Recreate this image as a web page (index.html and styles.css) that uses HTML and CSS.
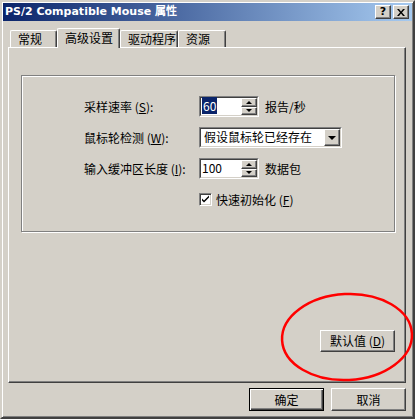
FILE: index.html
```html
<!doctype html>
<html lang="zh-CN">
  <head>
    <meta charset="UTF-8" />
    <meta name="viewport" content="width=device-width, initial-scale=1.0" />
    <title>PS/2 Compatible Mouse 属性</title>
    <link rel="stylesheet" href="styles.css">
  </head>
  <body>
    <div class="window">
      <div class="titlebar">
        <span class="title">PS/2 Compatible Mouse 属性</span>
        <div class="caption-buttons">
          <div class="cap-btn">?</div>
          <div class="cap-btn">
            <svg width="8" height="7" viewBox="0 0 8 7">
              <path d="M0 0h2l2 2.5L6 0h2L5 3.5 8 7H6L4 4.5 2 7H0l3-3.5z" fill="#000" />
            </svg>
          </div>
        </div>
      </div>

      <div class="tabs">
        <div class="tab tab-general">常规</div>
        <div class="tab tab-advanced active">高级设置</div>
        <div class="tab tab-driver">驱动程序</div>
        <div class="tab tab-resource">资源</div>
      </div>

      <div class="panel">
        <div class="group">
          <div class="row">
            <span class="label">采样速率 (<u>S</u>):</span>
            <div class="spin">
              <div class="spin-inner">
                <div class="spin-value"><span class="selected">60</span></div>
                <div class="spin-buttons">
                  <div class="spin-btn"><span class="arrow-up"></span></div>
                  <div class="spin-btn"><span class="arrow-down"></span></div>
                </div>
              </div>
            </div>
            <span class="unit">报告/秒</span>
          </div>

          <div class="row">
            <span class="label">鼠标轮检测 (<u>W</u>):</span>
            <div class="combo">
              <div class="combo-inner">
                <div class="combo-value">假设鼠标轮已经存在</div>
                <div class="combo-btn"><span class="arrow-down big"></span></div>
              </div>
            </div>
          </div>

          <div class="row">
            <span class="label">输入缓冲区长度 (<u>I</u>):</span>
            <div class="spin">
              <div class="spin-inner">
                <div class="spin-value">100</div>
                <div class="spin-buttons">
                  <div class="spin-btn"><span class="arrow-up"></span></div>
                  <div class="spin-btn"><span class="arrow-down"></span></div>
                </div>
              </div>
            </div>
            <span class="unit">数据包</span>
          </div>

          <div class="row check-row">
            <div class="checkbox">
              <svg width="9" height="9" viewBox="0 0 9 9">
                <path d="M1 3.5l2 2 5-5v2l-5 5-2-2z" fill="#000" />
              </svg>
            </div>
            <span class="check-label">快速初始化 (<u>F</u>)</span>
          </div>
        </div>

        <div class="panel-footer">
          <div class="btn">默认值 (<u>D</u>)</div>
        </div>
      </div>

      <div class="actions">
        <div class="btn default">确定</div>
        <div class="btn">取消</div>
      </div>

      <!-- red hand-drawn annotation -->
      <svg class="annotation" width="415" height="419" viewBox="0 0 415 419">
        <ellipse cx="345" cy="335" rx="65" ry="43" transform="rotate(-3 345 335)"
          fill="none" stroke="#f00" stroke-width="2.5" />
      </svg>
    </div>
  </body>
</html>
```

FILE: styles.css
```css
* {
  box-sizing: border-box;
}
body {
  margin: 0;
  background: #d4d0c8;
  font-family: "Noto Sans CJK SC", "Liberation Sans", sans-serif;
  font-size: 12px;
  line-height: 14px;
  color: #000;
}
u {
  text-decoration: underline;
  text-underline-offset: 1px;
}
.window {
  position: relative;
  width: 415px;
  height: 419px;
  background: #d4d0c8;
  border: 2px solid;
  border-color: #d4d0c8 #404040 #404040 #d4d0c8;
  box-shadow: inset 1px 1px #fff, inset -1px -1px #808080;
  padding: 1px;
}
.titlebar {
  height: 18px;
  display: flex;
  align-items: center;
  justify-content: space-between;
  padding: 0 3px 0 2px;
  background: linear-gradient(to right, #0a246a, #a6caf0);
}
.title {
  color: #fff;
  font-family: "DejaVu Sans", sans-serif;
  font-weight: bold;
  font-size: 11px;
}
.caption-buttons {
  display: flex;
  gap: 2px;
}
.cap-btn {
  width: 16px;
  height: 14px;
  display: flex;
  align-items: center;
  justify-content: center;
  background: #d4d0c8;
  border: 1px solid;
  border-color: #fff #404040 #404040 #fff;
  box-shadow: inset -1px -1px #808080;
  font-family: "DejaVu Sans", sans-serif;
  font-weight: bold;
  font-size: 11px;
}

/* tabs */
.tabs {
  display: flex;
  align-items: flex-end;
  height: 19px;
  margin-top: 7px;
  padding-left: 7px;
}
.tab {
  height: 17px;
  padding-left: 7px;
  border: 1px solid #fff;
  border-right-color: #404040;
  border-bottom: none;
  box-shadow: inset -1px 0 #808080;
  border-radius: 2px 2px 0 0;
  background: #d4d0c8;
  line-height: 15px;
}
.tab.active {
  position: relative;
  z-index: 1;
  height: 20px;
  margin-bottom: -1px;
  line-height: 17px;
}
.tab-general { width: 47px; }
.tab-advanced { width: 63px; }
.tab-driver { width: 58px; }
.tab-resource { width: 48px; }

/* panel */
.panel {
  width: 398px;
  height: 336px;
  margin-left: 5px;
  padding: 27px 0 0 12px;
  border: 1px solid;
  border-color: #fff #404040 #404040 #fff;
  box-shadow: inset -1px -1px #808080;
}
.group {
  width: 374px;
  height: 157px;
  padding: 20px 0 0 62px;
  border: 1px solid #808080;
  box-shadow: inset 1px 1px #fff, 1px 1px #fff;
  display: flex;
  flex-direction: column;
  gap: 10px;
}
.row {
  display: flex;
  align-items: center;
  height: 21px;
}
.label {
  width: 115px;
}
.unit {
  margin-left: 6px;
}

/* spin box */
.spin,
.combo {
  border: 1px solid;
  border-color: #808080 #fff #fff #808080;
  height: 21px;
}
.spin {
  width: 60px;
}
.combo {
  width: 143px;
}
.spin-inner,
.combo-inner {
  display: flex;
  height: 100%;
  border: 1px solid;
  border-color: #404040 #d4d0c8 #d4d0c8 #404040;
  background: #fff;
}
.spin-value {
  flex: 1;
  padding: 1px 0 0 1px;
}
.selected {
  background: #0a246a;
  color: #fff;
  padding: 0 1px;
}
.spin-buttons {
  width: 16px;
  display: flex;
  flex-direction: column;
}
.spin-btn {
  flex: 1;
  display: flex;
  align-items: center;
  justify-content: center;
  background: #d4d0c8;
  border: 1px solid;
  border-color: #fff #404040 #404040 #fff;
  box-shadow: inset -1px -1px #808080;
}
.arrow-up,
.arrow-down {
  width: 0;
  height: 0;
  border-left: 3px solid transparent;
  border-right: 3px solid transparent;
}
.arrow-up {
  border-bottom: 3px solid #000;
}
.arrow-down {
  border-top: 3px solid #000;
}
.arrow-down.big {
  border-left-width: 4px;
  border-right-width: 4px;
  border-top-width: 4px;
}

/* combo */
.combo-value {
  flex: 1;
  padding: 1px 0 0 3px;
}
.combo-btn {
  width: 16px;
  display: flex;
  align-items: center;
  justify-content: center;
  background: #d4d0c8;
  border: 1px solid;
  border-color: #fff #404040 #404040 #fff;
  box-shadow: inset -1px -1px #808080;
}

/* checkbox */
.check-row {
  padding-left: 115px;
}
.checkbox {
  width: 13px;
  height: 13px;
  display: flex;
  align-items: center;
  justify-content: center;
  background: #fff;
  border: 1px solid;
  border-color: #808080 #fff #fff #808080;
  box-shadow: inset 1px 1px #404040, inset -1px -1px #d4d0c8;
}
.check-label {
  margin-left: 4px;
}

/* buttons */
.panel-footer {
  width: 374px;
  margin-top: 98px;
  display: flex;
  justify-content: flex-end;
}
.btn {
  width: 75px;
  height: 22px;
  display: flex;
  align-items: center;
  justify-content: center;
  background: #d4d0c8;
  border: 1px solid;
  border-color: #fff #404040 #404040 #fff;
  box-shadow: inset -1px -1px #808080;
}
.actions {
  display: flex;
  justify-content: flex-end;
  gap: 7px;
  margin-top: 5px;
  padding-right: 6px;
}
.actions .btn {
  height: 23px;
}
.btn.default {
  border-color: #000;
  box-shadow: inset 1px 1px #fff, inset -1px -1px #404040, inset -2px -2px #808080;
}
.annotation {
  position: absolute;
  left: 0;
  top: 0;
  pointer-events: none;
}
```
